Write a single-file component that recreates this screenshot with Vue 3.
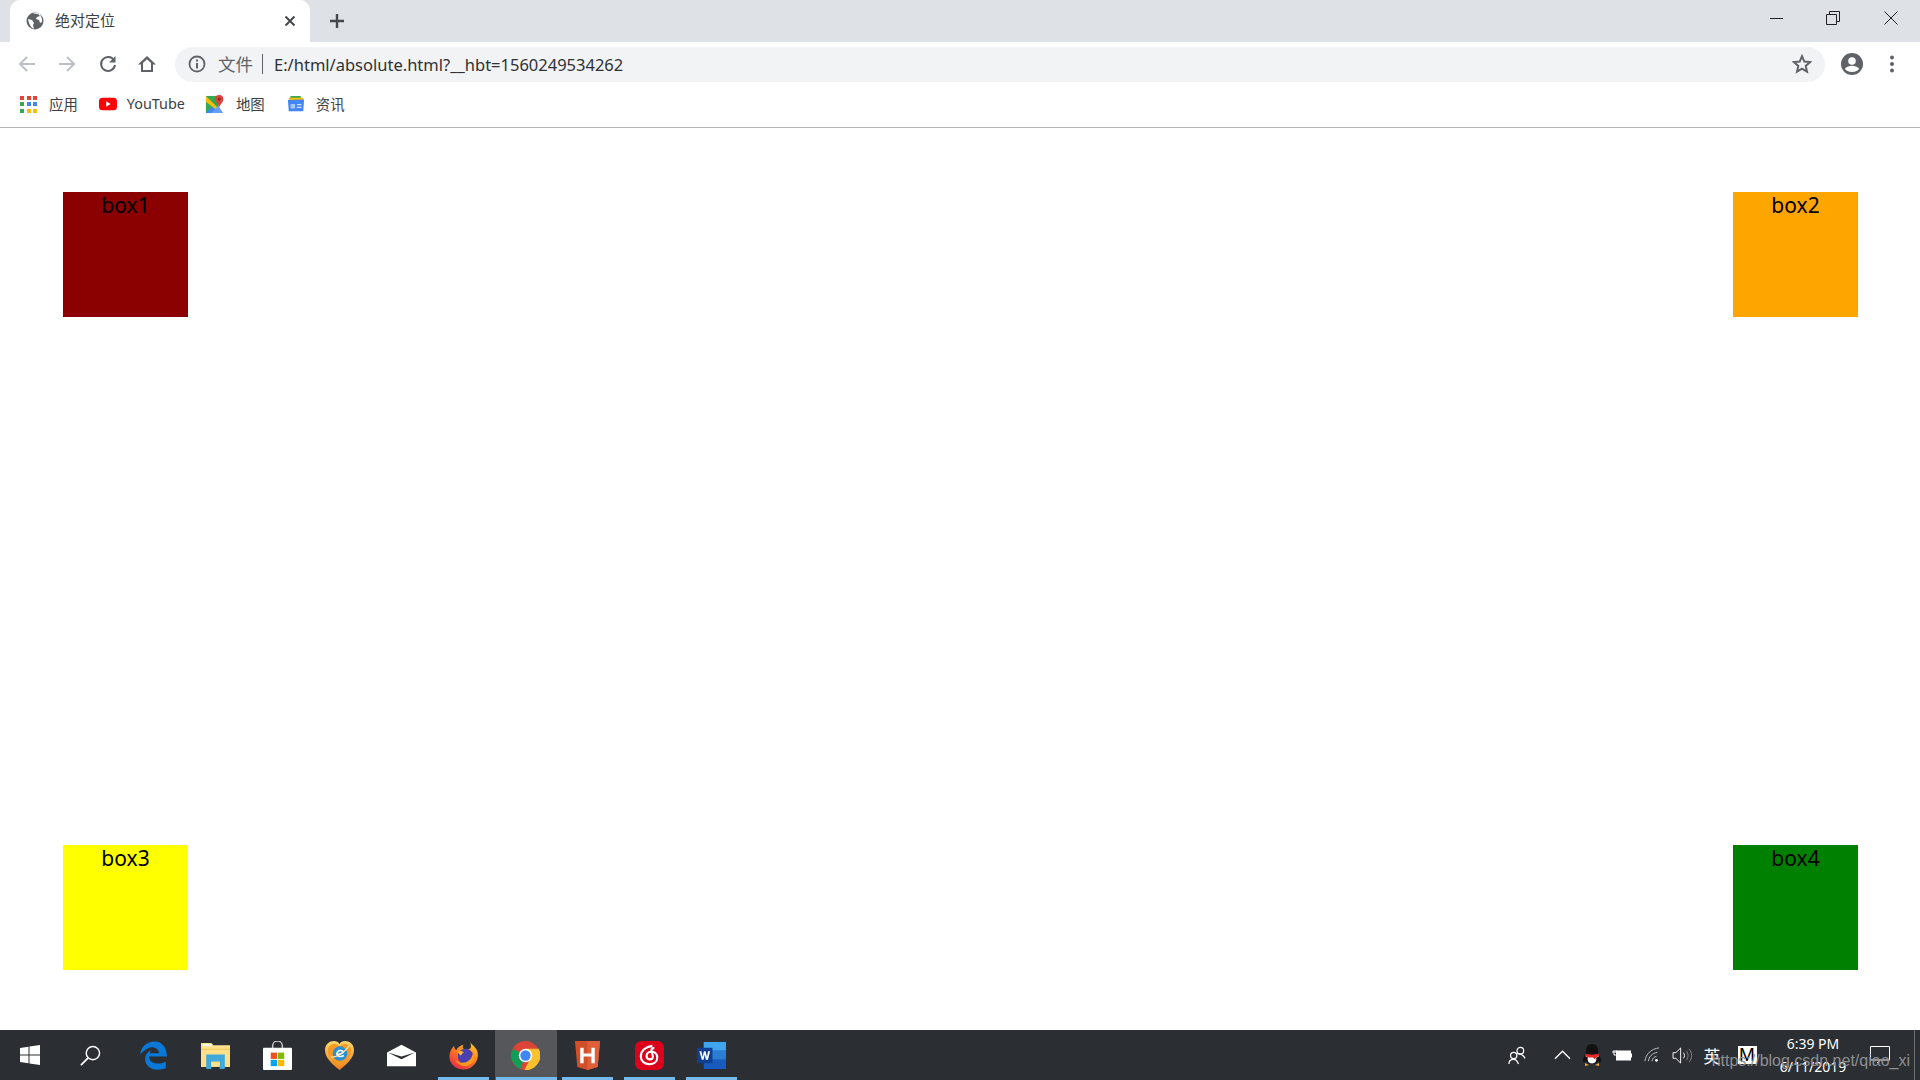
<script setup>
const boxes = [
  { name: 'box1', color: 'darkred' },
  { name: 'box2', color: 'orange' },
  { name: 'box3', color: 'yellow' },
  { name: 'box4', color: 'green' }
]
const appDots = ['#ea4335','#ea4335','#ea4335','#34a853','#4285f4','#4285f4','#34a853','#fbbc05','#fbbc05']
</script>

<template>
  <div class="screen">
    <header class="chrome">
      <div class="tabstrip">
        <div class="tab">
          <svg class="favicon" viewBox="0 0 18 18"><circle cx="9" cy="9" r="8.500" fill="#5f6368"/><path d="M2 7l4 1 2 3-1 2 1 4-3-2-2-4zM7 1.500l5 .5 2 2-3 1-1 2 3 1 1 3 2-1v-3l-2-5-4-1.500z" fill="#fff"/></svg>
          <span class="tab-title">绝对定位</span>
          <svg class="tab-close" viewBox="0 0 12 12"><path d="M1.500 1.500l9 9M10.500 1.500l-9 9" stroke="#45484c" stroke-width="2" fill="none"/></svg>
        </div>
        <svg class="new-tab" viewBox="0 0 16 16"><path d="M8 1v14M1 8h14" stroke="#45484c" stroke-width="2.400" fill="none"/></svg>
        <div class="window-controls">
          <div class="win-btn"><svg viewBox="0 0 14 14"><path d="M1 7.500h13" stroke="#202124" stroke-width="1" fill="none"/></svg></div>
          <div class="win-btn"><svg viewBox="0 0 14 14"><path d="M.5 3.500h10v10H.5zM3.500 3.500v-3h10v10h-3" stroke="#202124" fill="none"/></svg></div>
          <div class="win-btn"><svg viewBox="0 0 14 14"><path d="M.5.500l13 13M13.500.500l-13 13" stroke="#202124" fill="none"/></svg></div>
        </div>
      </div>

      <div class="toolbar">
        <div class="nav-btn"><svg viewBox="0 0 18 18"><path d="M17 9H2M9 2L2 9l7 7" stroke="#bdc1c6" stroke-width="2" fill="none"/></svg></div>
        <div class="nav-btn"><svg viewBox="0 0 18 18"><path d="M1 9h15M9 2l7 7-7 7" stroke="#bdc1c6" stroke-width="2" fill="none"/></svg></div>
        <div class="nav-btn reload"><svg viewBox="0 0 18 18"><path d="M15 5.200A7 7 0 1 0 16 10" stroke="#5f6368" stroke-width="2" fill="none"/><path d="M16.500 1v6.500H10z" fill="#5f6368"/></svg></div>
        <div class="nav-btn home"><svg viewBox="0 0 18 18"><path d="M9 1L0 9.500h3V17h12V9.500h3zM5 15V8l4-3.800L13 8v7z" fill="#5f6368" fill-rule="evenodd"/></svg></div>
        <div class="omnibox">
          <svg class="info" viewBox="0 0 18 18"><circle cx="9" cy="9" r="7.500" stroke="#5f6368" stroke-width="1.800" fill="none"/><path d="M8 8h2v5.500H8zM8 4.500h2v2H8z" fill="#5f6368"/></svg>
          <span class="scheme">文件</span>
          <span class="sep"></span>
          <span class="url">E:/html/absolute.html?__hbt=1560249534262</span>
          <svg class="star" viewBox="0 0 20 20"><path d="M10 2.200l2.300 5.400 5.800.5-4.400 3.800 1.300 5.700-5-3-5 3 1.300-5.700-4.400-3.800 5.800-.5z" stroke="#5f6368" stroke-width="2" fill="none"/></svg>
        </div>
        <div class="nav-btn avatar"><svg viewBox="0 0 22 22"><circle cx="11" cy="11" r="11" fill="#5f6368"/><circle cx="11" cy="8" r="3.800" fill="#fff"/><path d="M3.800 16c2-2.600 4.600-3.200 7.200-3.200s5.200.6 7.200 3.200c-1.800 2-4.400 3-7.200 3s-5.400-1-7.200-3z" fill="#fff"/></svg></div>
        <div class="nav-btn"><svg class="menu" viewBox="0 0 4 18"><circle cx="2" cy="2.500" r="2" fill="#5f6368"/><circle cx="2" cy="9" r="2" fill="#5f6368"/><circle cx="2" cy="15.500" r="2" fill="#5f6368"/></svg></div>
      </div>

      <div class="bookmarks">
        <div class="bookmark apps-mark">
          <div class="apps"><i v-for="(c, i) in appDots" :key="i" :style="{ background: c }"></i></div>
          <span>应用</span>
        </div>
        <div class="bookmark yt-mark">
          <svg viewBox="0 0 20 16"><rect y="1" width="20" height="14" rx="4" fill="#f00"/><path d="M8 5l5 3-5 3z" fill="#fff"/></svg>
          <span>YouTube</span>
        </div>
        <div class="bookmark map-mark">
          <svg viewBox="0 0 20 20"><path d="M1 1h13v18H1z" fill="#34a853"/><path d="M1 19l7-8 6 8z" fill="#4285f4"/><path d="M1 1l12 12-2 2L1 7z" fill="#fbbc05"/><path d="M7 19l7-8 5 8z" fill="#669df6"/><path d="M15 0a4.300 4.300 0 0 1 4.300 4.300c0 3-3 5-4.300 8.700-1.300-3.700-4.300-5.700-4.300-8.700A4.300 4.300 0 0 1 15 0z" fill="#db4437"/><circle cx="15" cy="4.300" r="1.500" fill="#8a231b"/></svg>
          <span>地图</span>
        </div>
        <div class="bookmark news-mark">
          <svg viewBox="0 0 20 20"><path d="M4 1h11l1 4H3z" fill="#34a853"/><path d="M2 3h16v3H2z" fill="#fbbc05"/><path d="M1 5.500l18-.5-1 13H2z" fill="#4285f4"/><path d="M4 10h5v5H4z" fill="#a8c7fa"/><path d="M11 10h5v1.500h-5zM11 13h5v1.500h-5z" fill="#d2e3fc"/></svg>
          <span>资讯</span>
        </div>
      </div>
    </header>

    <main class="page">
      <div v-for="b in boxes" :key="b.name" class="box" :style="{ background: b.color }">{{ b.name }}</div>
    </main>

    <footer class="taskbar">
      <div class="task-left">
        <div class="slot start"><svg viewBox="0 0 20 20"><path d="M0 3l8.500-1.200V9.500H0zM9.500 1.600L20 0v9.500H9.500zM0 10.500h8.500v7.700L0 17zM9.500 10.500H20V20L9.500 18.400z" fill="#fff"/></svg></div>
        <div class="slot search"><svg viewBox="0 0 22 22"><circle cx="13.500" cy="8.500" r="7" stroke="#fff" stroke-width="1.500" fill="none"/><path d="M8.500 13.500L1 21" stroke="#fff" stroke-width="1.800" fill="none"/></svg></div>
        <div class="slot app"><svg viewBox="0 0 26 26"><path d="M1 12C2 5 7 .500 14 .500 21 .500 25 6 25 14H9c0 5 6 8.500 15 4.500v6C14 28 5 24 5.500 15.500 6 11 9 9 11 8c-1 1.500-1.500 3-1.500 3h8.500c0-4.500-6-7-10-4.500C5.500 8 3 10 1 12z" fill="#0a78d7"/></svg></div>
        <div class="slot app"><svg viewBox="0 0 28 26"><path d="M0 1h10l2 2h16v21H0z" fill="#ffe08a"/><path d="M2 2h8v2H2z" fill="#fff"/><path d="M0 7h28" stroke="#f0c85a"/><path d="M5 12h18v14h-5v-7h-8v7H5z" fill="#3fa9dc"/><path d="M10 19h8v4h-8z" fill="#ffe08a"/></svg></div>
        <div class="slot app"><svg viewBox="0 0 30 30"><path d="M10 9V5a5 5 0 0 1 10 0v4" stroke="#c8c8c8" stroke-width="1.500" fill="none"/><rect y="7" width="30" height="23" rx="1" fill="#fff"/><rect x="8" y="12" width="6.500" height="6.500" fill="#f25022"/><rect x="15.500" y="12" width="6.500" height="6.500" fill="#7fba00"/><rect x="8" y="19.500" width="6.500" height="6.500" fill="#00a4ef"/><rect x="15.500" y="19.500" width="6.500" height="6.500" fill="#ffb900"/></svg></div>
        <div class="slot app"><svg viewBox="0 0 30 30"><defs><linearGradient id="heartRim" x1="0" y1="0" x2="0" y2="1"><stop offset="0" stop-color="#fbd56b"/><stop offset="1" stop-color="#ee7f1c"/></linearGradient></defs><path d="M15 30C8 24 0 18 0 9.500 0 3 5 0 9 0c3 0 5 1 6 3 1-2 3-3 6-3 4 0 9 3 9 9.500C30 18 22 24 15 30z" fill="url(#heartRim)"/><path d="M15 26C9 21 3 16 3 10 3 5.500 6.500 3 9.500 3c2.500 0 4.500 1 5.500 3 1-2 3-3 5.500-3C23.500 3 27 5.500 27 10c0 6-6 11-12 16z" fill="#f59a23"/><circle cx="15.500" cy="13" r="7.500" fill="#2a8fd8"/><path d="M11.500 13.500c3.500.5 6.500-.5 7.500-2-1-2.500-6-2-6.500 1-.5 3.500 3.500 4.500 7 2.500" stroke="#fff" stroke-width="1.600" fill="none"/><path d="M6 17C12 17 20 12 25 5" stroke="#ffe9a8" stroke-width="1.200" fill="none"/></svg></div>
        <div class="slot app"><svg viewBox="0 0 30 22"><path d="M0 8L15 0l15 8v14H0z" fill="#fff"/><path d="M1 8l14 7 14-7-14 4z" fill="#2b2e33"/></svg></div>
        <div class="slot app open"><svg viewBox="0 0 28 28"><defs><linearGradient id="foxBody" x1="0.800" y1="0" x2="0.200" y2="1"><stop offset="0" stop-color="#ffcb2d"/><stop offset=".5" stop-color="#ff7a1f"/><stop offset="1" stop-color="#e5264b"/></linearGradient></defs><path d="M20 0c1 3 5 5 7 9 1.500 3.500 1 8-1 11.500A14 14 0 0 1 1 19C-.5 14 1 8 5 4.500 5 7 6 8 7 9c1-3 4-5 7-5.500-1 2-1 3 0 4 3 1 6 .5 7-1 .5-2.500 0-4.500-1-6.500z" fill="url(#foxBody)"/><circle cx="16" cy="15" r="7.500" fill="#4a3fb0"/><path d="M23.500 10c2.500 6 .5 11.500-4.500 13.500-5.500 2-11-1-13-5.500 3 3 7 3.500 10.500 2.500 3.500-1 6-4.500 7-10.500z" fill="#ff9a1f"/><path d="M9 9.500c2-.5 4 .5 5.500 1.500-2 .5-2 2-3 3-1.500-.5-3-3-2.500-4.500z" fill="#ffb52e"/></svg></div>
        <div class="slot app open active"><svg viewBox="0 0 28 28"><circle cx="14" cy="14" r="14" fill="#db4437"/><path d="M14 14L2 7.500A14 14 0 0 0 9 27.100z" fill="#0f9d58"/><path d="M14 7.500h12.700A14 14 0 0 1 13 28l7-14z" fill="#fbc02d"/><circle cx="14" cy="14" r="6.500" fill="#fff"/><circle cx="14" cy="14" r="5" fill="#4285f4"/></svg></div>
        <div class="slot app open"><svg viewBox="0 0 26 30"><path d="M0 0h26l-2.500 27L13 30 2.500 27z" fill="#d24f2a"/><path d="M13 0h13l-2.500 27L13 30z" fill="#df5f39"/><path d="M5.500 7h3.500v6h8V7h3.500v16H17v-7H9v7H5.500z" fill="#fff"/></svg></div>
        <div class="slot app open"><svg class="netease" viewBox="0 0 30 30"><rect width="30" height="30" rx="6" fill="#dd001b"/><path d="M18 5c-7 1-12 5-12 11 0 5 4 8 9 8s8-3 8-7-3-6-6-6-5 2-5 4.500 2 3.500 3.500 3.500 3-1 3-3-1-3-1.500-6c-.300-2 1-3 3-2.500" stroke="#fff" stroke-width="2.200" fill="none"/></svg></div>
        <div class="slot app open"><svg viewBox="0 0 30 28"><path d="M7 0h23v28H7z" fill="#185abd"/><path d="M7 0h23v9H7z" fill="#41a5ee"/><path d="M7 9h23v9H7z" fill="#2b7cd3"/><rect y="6" width="16" height="16" fill="#103f91"/><path d="M2.500 9.500h2l1.200 6 1.500-6h1.600l1.500 6 1.200-6h2l-2.200 9H9.200L8 13l-1.200 5.500H5z" fill="#fff"/></svg></div>
      </div>

      <div class="tray">
        <div class="t people"><svg viewBox="0 0 20 20"><circle cx="13" cy="5" r="3.500" stroke="#fff" stroke-width="1.300" fill="none"/><circle cx="6" cy="10" r="3.300" stroke="#fff" stroke-width="1.300" fill="none"/><path d="M1 19c0-3 2-5 5-5s4 2 5 5M10 8c3 0 6 1.500 8 5" stroke="#fff" stroke-width="1.300" fill="none"/></svg></div>
        <div class="t caret"><svg viewBox="0 0 18 10"><path d="M1 9l8-8 8 8" stroke="#fff" stroke-width="1.400" fill="none"/></svg></div>
        <div class="t"><svg class="qq" viewBox="0 0 20 22"><path d="M10 0c4 0 6 3 6 7 0 2 3 6 3 10 0 1-1 2-3 0-1 2-3 3-6 3s-5-1-6-3c-2 2-3 1-3 0 0-4 3-8 3-10 0-4 2-7 6-7z" fill="#111"/><path d="M5 11h10l2 1-1 1-2 .5c1 2 0 6-4 6s-5-4-4-6l-3-1.500z" fill="#fff"/><path d="M3 9.500c4 1.500 10 1.500 14 0v2.500l-3 1.500-1 2-2-2H7l-3-1z" fill="#e02a2a"/><path d="M3 19l4 2-4 1zM17 19l-4 2 4 1z" fill="#f5a623"/></svg></div>
        <div class="t"><svg class="battery" viewBox="0 0 20 12"><path d="M0 3h2V1M2 3h2V1M2 3v3h2" stroke="#fff" fill="none"/><rect x="4.500" y="2" width="14" height="9" stroke="#fff" fill="#fff"/><rect x="19" y="4.500" width="1" height="4" fill="#fff"/></svg></div>
        <div class="t wifi"><svg viewBox="0 0 18 18"><path d="M1 16C2 8 8 2 17 1M5 16c.500-5 4-9 10-10M9 16c.300-2.500 2-5 5-5.500" stroke="#d0d2d4" stroke-width="1" fill="none"/><circle cx="14" cy="15" r="1.600" fill="#fff"/></svg></div>
        <div class="t"><svg class="volume" viewBox="0 0 22 18"><path d="M1 6h3l5-5v16l-5-5H1z" stroke="#fff" fill="none"/><path d="M12 6c1.500 2 1.500 4 0 6" stroke="#fff" fill="none"/><path d="M15 4c2.500 3 2.500 7 0 10M18 2c3.500 4 3.500 10 0 14" stroke="#888" fill="none"/></svg></div>
        <div class="t ime">英</div>
        <div class="t mbox"><span>M</span></div>
        <div class="clock"><span>6:39 PM</span><span>6/11/2019</span></div>
        <div class="t notif"><svg viewBox="0 0 20 18"><path d="M.5.500h19v13.500h-19z" stroke="#fff" fill="none"/><path d="M7 17l3-2.500" stroke="#fff" fill="none"/></svg></div>
        <div class="show-desktop"></div>
      </div>
      <div class="watermark">https://blog.csdn.net/qiao_xi</div>
    </footer>
  </div>
</template>

<style scoped>
.screen { width: 1920px; height: 1080px; display: flex; flex-direction: column; background: #fff; overflow: hidden; position: relative; font-family: "Noto Sans", "Noto Sans CJK SC", sans-serif; }
svg { display: block; }

.chrome { height: 128px; flex: none; border-bottom: 1px solid #b4b4b4; box-sizing: border-box; }
.tabstrip { height: 42px; background: #dee1e6; display: flex; align-items: center; }
.tab { width: 300px; height: 42px; margin-left: 10px; box-sizing: border-box; padding: 0 14px 0 16px; background: #fff; border-radius: 10px 10px 0 0; display: flex; align-items: center; }
.favicon { width: 18px; height: 18px; }
.tab-title { margin: -3px 0 0 11px; font-size: 15px; color: #3c4043; }
.tab-close { width: 12px; height: 12px; margin-left: auto; }
.new-tab { width: 16px; height: 16px; margin-left: 19px; }
.window-controls { display: flex; margin-left: auto; height: 100%; align-items: flex-start; }
.win-btn { width: 58px; height: 36px; display: flex; align-items: center; justify-content: center; }
.win-btn svg { width: 14px; height: 14px; }
.win-btn:first-child svg { margin-left: 2px; }

.toolbar { height: 44px; display: flex; align-items: center; padding: 0 8px 0 7px; box-sizing: border-box; }
.nav-btn { width: 40px; height: 36px; flex: none; display: flex; align-items: center; justify-content: center; }
.nav-btn svg { width: 18px; height: 18px; }
.nav-btn.reload svg { margin-left: 1px; }
.nav-btn.avatar { margin-left: 7px; }
.nav-btn.avatar svg { width: 22px; height: 22px; }
.nav-btn svg.menu { width: 4px; height: 18px; }
.omnibox { flex: 1; margin-left: 8px; height: 35px; border-radius: 18px; background: #f1f3f4; display: flex; align-items: center; padding: 0 13px; box-sizing: border-box; }
.info { width: 18px; height: 18px; }
.scheme { margin: -2px 0 0 12px; font-size: 17.5px; color: #5f6368; }
.sep { width: 1px; height: 20px; background: #5f6368; margin-left: 9px; }
.url { margin-left: 11px; font-size: 16.500px; color: #303134; }
.star { width: 20px; height: 20px; margin-left: auto; }

.bookmarks { height: 41px; box-sizing: border-box; padding-bottom: 5px; display: flex; align-items: center; font-size: 14.4px; color: #3c4043; }
.bookmark { display: flex; align-items: center; }
.bookmark span { margin-top: -2px; }
.apps-mark { margin-left: 20px; gap: 12px; }
.apps { width: 17px; height: 17px; display: grid; grid-template-columns: repeat(3, 4px); grid-auto-rows: 4px; gap: 2.500px; }
.yt-mark { margin-left: 21px; gap: 10px; }
.yt-mark svg { width: 18px; height: 16px; }
.map-mark { margin-left: 20px; gap: 12px; }
.map-mark svg { width: 19px; height: 19px; }
.news-mark { margin-left: 22px; gap: 11px; }
.news-mark svg { width: 18px; height: 18px; }

.page { flex: 1; display: grid; grid-template-columns: 125px 125px; justify-content: space-between; align-content: space-between; padding: 64px 62px 60px 63px; }
.box { width: 125px; height: 125px; text-align: center; font-size: 21px; line-height: 27px; color: #000; }

.taskbar { height: 50px; flex: none; background: #2b2e33; display: flex; position: relative; }
.task-left { display: flex; height: 100%; }
.slot { height: 50px; display: flex; align-items: center; justify-content: center; position: relative; box-sizing: border-box; }
.start { width: 60px; }
.start svg { width: 20px; height: 20px; }
.search { width: 63px; }
.search svg { width: 21px; height: 21px; margin-left: -2px; }
.app { width: 62px; }
.app svg { width: 29px; height: 29px; margin-left: -2px; }
.open::after { content: ""; position: absolute; left: 5px; right: 6px; bottom: 0; height: 3px; background: #76b9ed; }
.active { background: #55575a; }
.active::after { left: 1px; right: 0; }
.netease { border-radius: 6px; }

.tray { margin-left: auto; display: flex; align-items: center; color: #fff; height: 100%; }
.t { width: 30px; height: 50px; display: flex; align-items: center; justify-content: center; flex: none; }
.people { width: 40px; margin-right: 10px; }
.people svg { width: 19px; height: 19px; }
.caret svg { width: 17px; height: 10px; }
.qq { width: 20px; height: 22px; }
.battery { width: 20px; height: 12px; }
.wifi svg { width: 16px; height: 16px; }
.volume { width: 21px; height: 17px; }
.ime { font-size: 17px; }
.mbox { margin-left: 5px; }
.mbox span { width: 19px; height: 18px; background: #fff; color: #000; font-size: 19px; line-height: 18px; text-align: center; font-family: "Liberation Sans", sans-serif; }
.clock { width: 94px; display: flex; flex-direction: column; align-items: center; font-size: 14px; line-height: 23px; margin-left: 4px; }
.notif { width: 40px; }
.notif svg { width: 20px; height: 18px; }
.show-desktop { width: 1px; height: 50px; background: #6c6e72; margin-left: 14px; margin-right: 5px; }
.watermark { position: absolute; right: 10px; top: 20px; font-family: "Liberation Sans", sans-serif; font-size: 16px; line-height: 22px; color: #8d8f92; white-space: nowrap; }
</style>
